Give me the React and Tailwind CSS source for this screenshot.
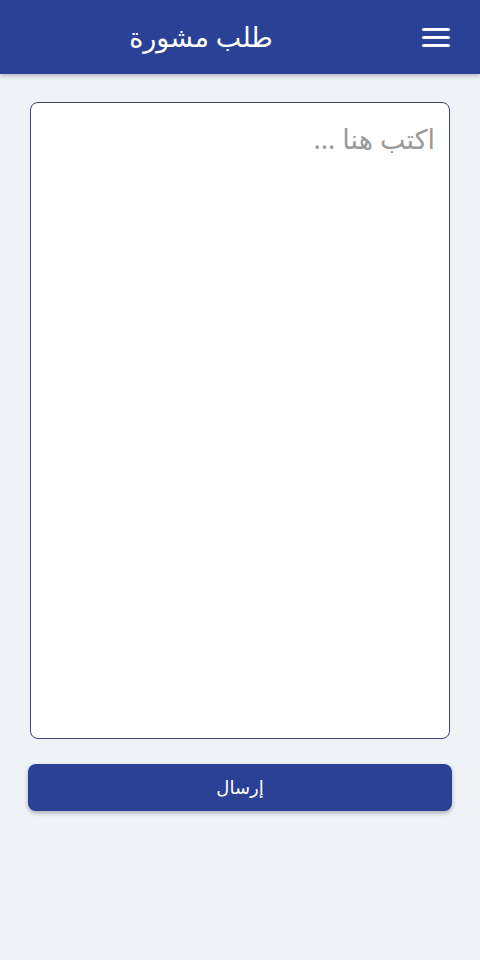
import { useState } from 'react';

export default function App() {
  const [text, setText] = useState('');

  return (
    <div dir="rtl" className="min-h-screen bg-[#eff2f7]" style={{ fontFamily: '"Noto Sans", "DejaVu Sans", sans-serif' }}>
      <header className="flex h-[74px] items-center bg-[#2a4196] px-[30px] shadow-[0_2px_4px_rgba(0,0,0,0.25)]">
        <button className="flex h-[28px] w-[28px] flex-col justify-center gap-[5px]">
          <span className="block h-[3px] w-[28px] rounded bg-white" />
          <span className="block h-[3px] w-[28px] rounded bg-white" />
          <span className="block h-[3px] w-[28px] rounded bg-white" />
        </button>
        <h1 className="flex-1 pr-[50px] text-center text-[27px] text-white">طلب مشورة</h1>
      </header>

      <main className="px-[28px] pt-[28px]">
        <textarea
          value={text}
          onChange={(e) => setText(e.target.value)}
          placeholder="اكتب هنا ..."
          className="mx-[2px] block h-[637px] w-[420px] resize-none rounded-[8px] border border-[#3d4570] bg-white px-[14px] py-[20px] text-[27px] leading-[32px] text-gray-700 outline-none placeholder:text-[#9a9a9a]"
        />
        <button className="mt-[25px] flex h-[47px] w-full items-center justify-center rounded-[8px] bg-[#2a4196] text-[18px] text-white shadow-[0_2px_4px_rgba(0,0,0,0.3)]">
          إرسال
        </button>
      </main>
    </div>
  );
}
